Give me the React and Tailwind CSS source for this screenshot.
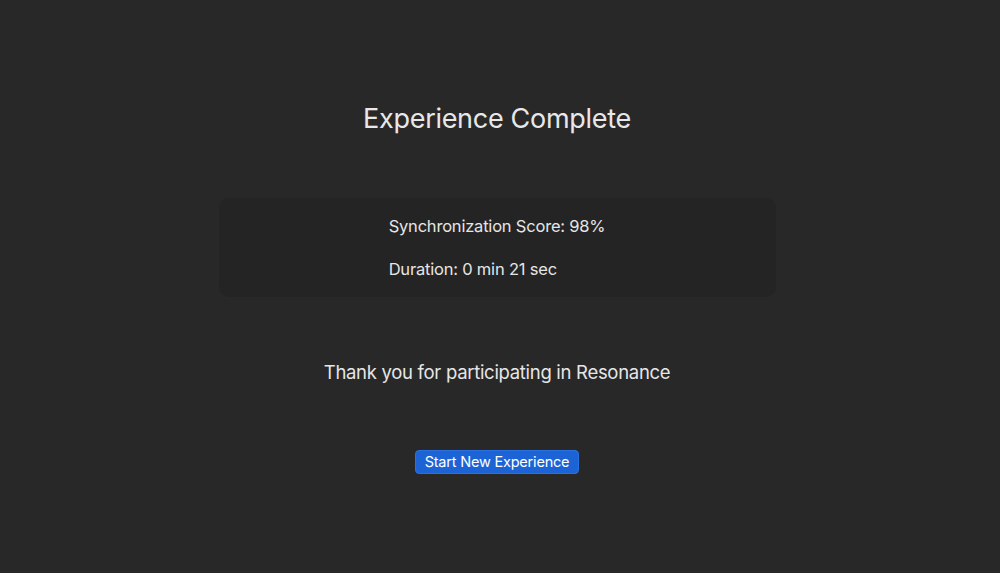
import React from 'react'

export default function App() {
  return (
    <div
      className="min-h-screen w-full bg-[#282828] text-[#e6e6e6] flex flex-col items-center pr-[6px]"
      style={{ fontFamily: 'Inter, "Noto Sans", sans-serif' }}
    >
      <h1 className="mt-[100px] text-[27px] leading-[38px] tracking-[-0.3px] font-normal text-[#e8e8e8]">Experience Complete</h1>

      <div className="mt-[60px] w-[557px] h-[99px] rounded-[10px] bg-[#242424] flex justify-center pt-[17px]">
        <div className="flex flex-col gap-[21px] text-[16.5px] leading-[22px] tracking-[-0.2px] text-[#e6e6e6]">
          <p>Synchronization Score: 98%</p>
          <p>Duration: 0 min 21 sec</p>
        </div>
      </div>

      <p className="mt-[62px] text-[18.5px] leading-[26px] tracking-[-0.3px] text-[#e6e6e6]">Thank you for participating in Resonance</p>

      <button className="mt-[65px] h-[24px] w-[164px] rounded-[4px] bg-[#1c64d6] border border-[#2a70e0] text-white text-[14.5px] leading-[22px] tracking-[-0.2px]">
        Start New Experience
      </button>
    </div>
  )
}
